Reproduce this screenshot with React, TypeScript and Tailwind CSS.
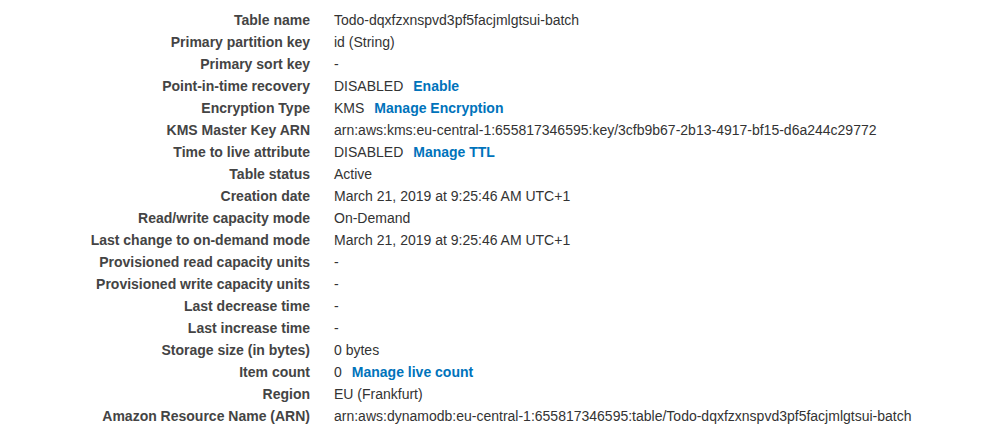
const rows: { label: string; value: string; link?: string }[] = [
  { label: "Table name", value: "Todo-dqxfzxnspvd3pf5facjmlgtsui-batch" },
  { label: "Primary partition key", value: "id (String)" },
  { label: "Primary sort key", value: "-" },
  { label: "Point-in-time recovery", value: "DISABLED", link: "Enable" },
  { label: "Encryption Type", value: "KMS", link: "Manage Encryption" },
  {
    label: "KMS Master Key ARN",
    value: "arn:aws:kms:eu-central-1:655817346595:key/3cfb9b67-2b13-4917-bf15-d6a244c29772",
  },
  { label: "Time to live attribute", value: "DISABLED", link: "Manage TTL" },
  { label: "Table status", value: "Active" },
  { label: "Creation date", value: "March 21, 2019 at 9:25:46 AM UTC+1" },
  { label: "Read/write capacity mode", value: "On-Demand" },
  { label: "Last change to on-demand mode", value: "March 21, 2019 at 9:25:46 AM UTC+1" },
  { label: "Provisioned read capacity units", value: "-" },
  { label: "Provisioned write capacity units", value: "-" },
  { label: "Last decrease time", value: "-" },
  { label: "Last increase time", value: "-" },
  { label: "Storage size (in bytes)", value: "0 bytes" },
  { label: "Item count", value: "0", link: "Manage live count" },
  { label: "Region", value: "EU (Frankfurt)" },
  {
    label: "Amazon Resource Name (ARN)",
    value: "arn:aws:dynamodb:eu-central-1:655817346595:table/Todo-dqxfzxnspvd3pf5facjmlgtsui-batch",
  },
];

export default function App() {
  return (
    <div
      className="w-[995px] h-[444px] bg-white pt-[9px] text-[14px] leading-[22px]"
      style={{ fontFamily: '"Liberation Sans", Arial, sans-serif' }}
    >
      {rows.map((r) => (
        <div key={r.label} className="flex">
          <div className="w-[310px] shrink-0 text-right font-bold text-[#444444]">{r.label}</div>
          <div className="pl-[24px] text-[#333333] whitespace-nowrap">
            {r.value}
            {r.link && <a className="ml-[10px] font-bold text-[#0073bb] cursor-pointer">{r.link}</a>}
          </div>
        </div>
      ))}
    </div>
  );
}
